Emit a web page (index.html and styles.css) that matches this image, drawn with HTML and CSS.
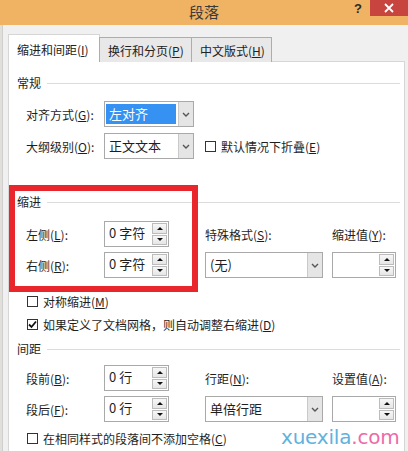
FILE: index.html
```html
<!DOCTYPE html>
<html lang="zh-CN">
<head>
  <meta charset="UTF-8">
  <title>段落</title>
  <link rel="stylesheet" href="styles.css">
</head>
<body>
  <div class="window">
    <header class="titlebar">
      <span class="titlebar-side"></span>
      <h1 class="titlebar-title">段落</h1>
      <div class="titlebar-side titlebar-buttons">
        <span class="help">?</span>
        <span class="close">
          <svg width="10" height="10" viewBox="0 0 10 10"><path d="M1 1 L9 9 M9 1 L1 9" stroke="#fff" stroke-width="1.8"/></svg>
        </span>
      </div>
    </header>

    <div class="window-body">
      <div class="backdrop"></div>
      <div class="dialog">
        <nav class="tabs">
          <span class="tab active">缩进和间距(<u>I</u>)</span>
          <span class="tab">换行和分页(<u>P</u>)</span>
          <span class="tab">中文版式(<u>H</u>)</span>
        </nav>

        <div class="panel">
          <!-- 常规 -->
          <div class="group-title">常规</div>
          <div class="row row-first">
            <span class="cell-label">对齐方式(<u>G</u>):</span>
            <div class="select select-short">
              <span class="select-value selected">左对齐</span>
              <span class="select-arrow"><svg width="8" height="5" viewBox="0 0 8 5"><path d="M1 1 L4 4 L7 1" fill="none" stroke="#555" stroke-width="1.4"/></svg></span>
            </div>
          </div>
          <div class="row">
            <span class="cell-label">大纲级别(<u>O</u>):</span>
            <div class="select select-short">
              <span class="select-value">正文文本</span>
              <span class="select-arrow"><svg width="8" height="5" viewBox="0 0 8 5"><path d="M1 1 L4 4 L7 1" fill="none" stroke="#555" stroke-width="1.4"/></svg></span>
            </div>
            <label class="check check-inline"><span class="box"></span>默认情况下折叠(<u>E</u>)</label>
          </div>

          <!-- 缩进 -->
          <div class="group-title group-indent">缩进</div>
          <div class="row row-indent-first">
            <span class="cell-label">左侧(<u>L</u>):</span>
            <div class="spin">
              <span class="spin-value">0 字符</span>
              <span class="spin-buttons"><span class="spin-up"></span><span class="spin-down"></span></span>
            </div>
            <span class="cell-wide">特殊格式(<u>S</u>):</span>
            <span class="cell-narrow">缩进值(<u>Y</u>):</span>
          </div>
          <div class="row">
            <span class="cell-label">右侧(<u>R</u>):</span>
            <div class="spin">
              <span class="spin-value">0 字符</span>
              <span class="spin-buttons"><span class="spin-up"></span><span class="spin-down"></span></span>
            </div>
            <div class="cell-wide">
              <div class="select select-long">
                <span class="select-value">(无)</span>
                <span class="select-arrow"><svg width="8" height="5" viewBox="0 0 8 5"><path d="M1 1 L4 4 L7 1" fill="none" stroke="#555" stroke-width="1.4"/></svg></span>
              </div>
            </div>
            <div class="spin spin-narrow">
              <span class="spin-value"></span>
              <span class="spin-buttons"><span class="spin-up"></span><span class="spin-down"></span></span>
            </div>
          </div>

          <label class="check check-row check-mirror"><span class="box"></span>对称缩进(<u>M</u>)</label>
          <label class="check check-row check-grid"><span class="box checked"><svg width="9" height="9" viewBox="0 0 9 9"><path d="M1 4.5 L3.5 7 L8 1.5" fill="none" stroke="#111" stroke-width="1.8"/></svg></span>如果定义了文档网格，则自动调整右缩进(<u>D</u>)</label>

          <!-- 间距 -->
          <div class="group-title group-spacing">间距</div>
          <div class="row row-spacing-first">
            <span class="cell-label">段前(<u>B</u>):</span>
            <div class="spin">
              <span class="spin-value">0 行</span>
              <span class="spin-buttons"><span class="spin-up"></span><span class="spin-down"></span></span>
            </div>
            <span class="cell-wide">行距(<u>N</u>):</span>
            <span class="cell-narrow">设置值(<u>A</u>):</span>
          </div>
          <div class="row">
            <span class="cell-label">段后(<u>F</u>):</span>
            <div class="spin">
              <span class="spin-value">0 行</span>
              <span class="spin-buttons"><span class="spin-up"></span><span class="spin-down"></span></span>
            </div>
            <div class="cell-wide">
              <div class="select select-long">
                <span class="select-value">单倍行距</span>
                <span class="select-arrow"><svg width="8" height="5" viewBox="0 0 8 5"><path d="M1 1 L4 4 L7 1" fill="none" stroke="#555" stroke-width="1.4"/></svg></span>
              </div>
            </div>
            <div class="spin spin-narrow">
              <span class="spin-value"></span>
              <span class="spin-buttons"><span class="spin-up"></span><span class="spin-down"></span></span>
            </div>
          </div>

          <label class="check check-row check-same"><span class="box"></span>在相同样式的段落间不添加空格(<u>C</u>)</label>
        </div>
      </div>
    </div>

    <!-- red annotation frame around the indent group -->
    <div class="mark-box"></div>
    <div class="watermark">xuexila<span>.com</span></div>
  </div>
</body>
</html>
```

FILE: styles.css
```css
* {
  box-sizing: border-box;
}

body {
  margin: 0;
  width: 408px;
  height: 451px;
  overflow: hidden;
  font-family: "Noto Sans CJK SC", "Noto Sans", sans-serif;
  font-size: 12px;
  color: #1e1e1e;
  background: #f0f0f0;
}

u {
  text-decoration: underline;
  text-underline-offset: 1px;
}

.window {
  position: relative;
  width: 408px;
  height: 451px;
}

/* title bar */
.titlebar {
  height: 25px;
  background: #f0b363;
  display: grid;
  grid-template-columns: 1fr auto 1fr;
  align-items: start;
}

.titlebar-title {
  margin: 0;
  padding-top: 2px;
  font-size: 15px;
  font-weight: normal;
  line-height: 20px;
  color: #3a3a3a;
}

.titlebar-buttons {
  display: flex;
  justify-content: flex-end;
  align-items: flex-start;
}

.help {
  font-family: "Liberation Sans", sans-serif;
  font-weight: bold;
  font-size: 13px;
  line-height: 16px;
  color: #2a2a2a;
  margin-top: 1px;
  margin-right: 8px;
}

.close {
  width: 38px;
  height: 16px;
  background: #c8443f;
  display: flex;
  align-items: center;
  justify-content: center;
}

/* body */
.window-body {
  display: flex;
  height: 426px;
}

.backdrop {
  width: 3px;
  background: #e2dfda;
  border-right: 1px solid #cfcfcf;
}

.dialog {
  flex: 1;
  padding: 9px 3px 0 5px;
  display: flex;
  flex-direction: column;
}

.tabs {
  display: flex;
  align-items: flex-end;
  height: 28px;
  margin-bottom: -1px;
  position: relative;
  z-index: 1;
}

.tab {
  height: 25px;
  padding: 1px 0 0 8px;
  line-height: 23px;
  background: #e8e8e8;
  border: 1px solid #adadad;
  border-bottom: none;
  color: #222;
  margin-left: -1px;
  white-space: nowrap;
}

.tab:first-child {
  margin-left: 0;
}

.tab.active {
  height: 28px;
  line-height: 27px;
  background: #fff;
  border-color: #d6d6d6;
  width: 92px;
}

.tab:nth-child(2) {
  width: 93px;
}

.tab:nth-child(3) {
  width: 81px;
}

.panel {
  flex: 1;
  background: #fff;
  border: 1px solid #d6d6d6;
  border-bottom: none;
  padding: 13px 4px 0 8px;
}

/* group header with rule */
.group-title {
  height: 16px;
  line-height: 16px;
  display: flex;
  align-items: center;
  color: #1e1e1e;
}

.group-title::after {
  content: '';
  flex: 1;
  border-top: 1px solid #dcdcdc;
  margin-left: 6px;
}

.group-indent {
  margin-top: 35px;
}

.group-spacing {
  margin-top: 9px;
}

/* rows */
.row {
  display: flex;
  align-items: center;
  height: 26px;
  margin-top: 6px;
}

.row-first {
  margin-top: 10px;
}

.row-indent-first {
  margin-top: 11px;
}

.row-indent-first + .row {
  margin-top: 5px;
}

.row-spacing-first {
  margin-top: 8px;
}

.row-spacing-first + .row {
  margin-top: 5px;
}

.cell-label {
  width: 87px;
  padding-left: 9px;
  white-space: nowrap;
}

.cell-wide {
  width: 127px;
  margin-left: 36px;
  white-space: nowrap;
}

.cell-narrow {
  width: 64px;
  white-space: nowrap;
}

/* dropdown */
.select {
  height: 26px;
  border: 1px solid #a9a9a9;
  background: #fff;
  display: flex;
  align-items: stretch;
}

.select-short {
  width: 90px;
}

.select-long {
  width: 118px;
}

.select-value {
  flex: 1;
  margin: 2px 2px 2px 1px;
  padding-left: 3px;
  line-height: 20px;
  font-size: 13px;
  white-space: nowrap;
}

.select-value.selected {
  background: #3591f2;
  color: #fff;
}

.select-arrow {
  width: 15px;
  background: #e5e5e5;
  border-left: 1px solid #c9c9c9;
  display: flex;
  align-items: center;
  justify-content: center;
}

/* spin box */
.spin {
  width: 65px;
  height: 26px;
  border: 1px solid #a9a9a9;
  background: #fff;
  display: flex;
  align-items: stretch;
}

.spin-narrow {
  width: 64px;
}

.spin-value {
  flex: 1;
  padding-left: 4px;
  line-height: 22px;
  font-size: 13px;
  white-space: nowrap;
}

.spin-buttons {
  width: 15px;
  margin: 1px 1px 1px 0;
  display: flex;
  flex-direction: column;
  gap: 1px;
}

.spin-up, .spin-down {
  flex: 1;
  border: 1px solid #bcbcbc;
  background: linear-gradient(#f7f7f7, #e6e6e6);
  display: flex;
  align-items: center;
  justify-content: center;
}

.spin-up::before, .spin-down::before {
  content: '';
  width: 0;
  height: 0;
  border-left: 3px solid transparent;
  border-right: 3px solid transparent;
}

.spin-up::before {
  border-bottom: 3px solid #111;
}

.spin-down::before {
  border-top: 3px solid #111;
}

/* check boxes */
.check {
  display: flex;
  align-items: center;
  height: 16px;
  white-space: nowrap;
}

.check-inline {
  margin-left: 11px;
}

.check-row {
  padding-left: 10px;
}

.check-mirror {
  margin-top: 15px;
}

.check-grid {
  margin-top: 7px;
}

.check-same {
  margin-top: 8px;
}

.box {
  width: 11px;
  height: 11px;
  border: 1px solid #333;
  background: #fff;
  margin-right: 5px;
  display: flex;
  align-items: center;
  justify-content: center;
}

/* overlays */
.mark-box {
  position: absolute;
  left: 9px;
  top: 185px;
  width: 189px;
  height: 107px;
  border: 6px solid #e8262c;
}

.watermark {
  position: absolute;
  left: 281px;
  top: 424px;
  font-family: "DejaVu Sans", sans-serif;
  font-size: 20px;
  line-height: 26px;
  color: #5fb2de;
  letter-spacing: -0.2px;
}

.watermark span {
  color: #ee6aa9;
}
```
